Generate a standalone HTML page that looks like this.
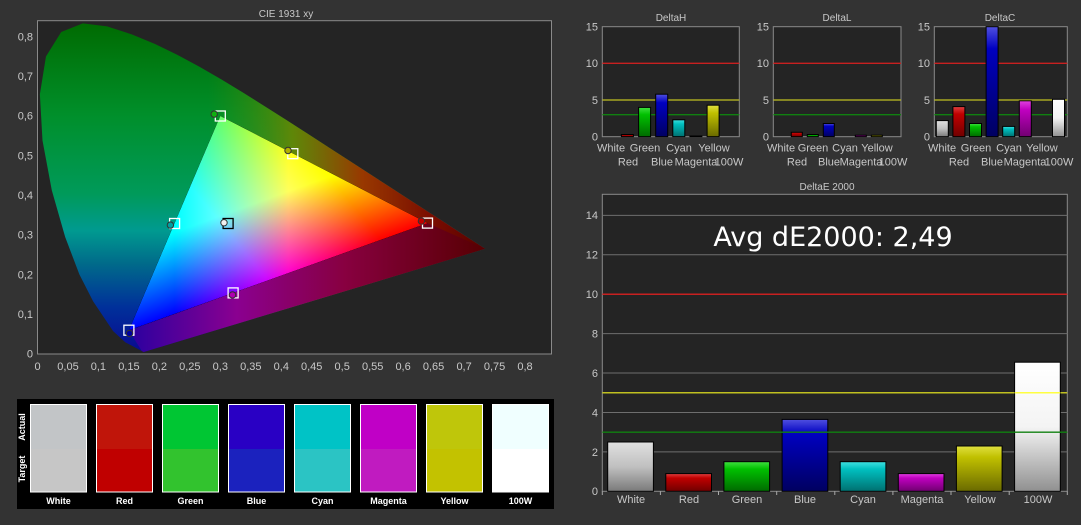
<!DOCTYPE html>
<html><head><meta charset="utf-8"><style>
html,body{margin:0;padding:0;background:#333;}
svg{display:block}
text{font-family:"Liberation Sans","DejaVu Sans",sans-serif;fill:#c8c8c8;}
</style></head><body>
<svg width="1081" height="525" viewBox="0 0 1081 525" xmlns="http://www.w3.org/2000/svg">
<defs>
<linearGradient id="locV" gradientUnits="userSpaceOnUse" x1="0" y1="0" x2="0" y2="0.84">
<stop offset="0" stop-color="#0a0890"/>
<stop offset="0.14" stop-color="#00309a"/>
<stop offset="0.27" stop-color="#006a8a"/>
<stop offset="0.37" stop-color="#009a90"/>
<stop offset="0.48" stop-color="#009a5a"/>
<stop offset="0.72" stop-color="#008f2a"/>
<stop offset="1" stop-color="#006a00"/>
</linearGradient>
<linearGradient id="locH" gradientUnits="userSpaceOnUse" x1="0.28" y1="0" x2="0.74" y2="0">
<stop offset="0" stop-color="#3a8a00" stop-opacity="0"/>
<stop offset="0.3" stop-color="#6f8500" stop-opacity="0.85"/>
<stop offset="0.55" stop-color="#983800"/>
<stop offset="0.8" stop-color="#7a0c00"/>
<stop offset="1" stop-color="#550000"/>
</linearGradient>
<linearGradient id="purp" gradientUnits="userSpaceOnUse" x1="0.15" y1="0" x2="0.74" y2="0">
<stop offset="0" stop-color="#2a00a0"/>
<stop offset="0.3" stop-color="#8a0090"/>
<stop offset="0.6" stop-color="#880040"/>
<stop offset="1" stop-color="#560000"/>
</linearGradient>
<linearGradient id="gR" gradientUnits="userSpaceOnUse" x1="427.5" y1="223.1" x2="174.6" y2="223.1">
<stop offset="0" stop-color="#ff0000"/><stop offset="0.55" stop-color="#ff0000"/><stop offset="1" stop-color="#000"/></linearGradient>
<linearGradient id="gG" gradientUnits="userSpaceOnUse" x1="220.3" y1="116" x2="278.2" y2="276.7">
<stop offset="0" stop-color="#00ff00"/><stop offset="0.55" stop-color="#00ff00"/><stop offset="1" stop-color="#000"/></linearGradient>
<linearGradient id="gB" gradientUnits="userSpaceOnUse" x1="128.9" y1="330.2" x2="323.9" y2="169.6">
<stop offset="0" stop-color="#0000ff"/><stop offset="0.55" stop-color="#0000ff"/><stop offset="1" stop-color="#000"/></linearGradient>
<clipPath id="locClip"><polygon points="0.1741,0.005 0.1440,0.0297 0.1241,0.0578 0.0913,0.1327 0.0687,0.2007 0.0454,0.2950 0.0235,0.4127 0.0082,0.5384 0.0039,0.6548 0.0139,0.7502 0.0389,0.8120 0.0743,0.8338 0.1142,0.8262 0.1547,0.8059 0.1929,0.7816 0.2296,0.7543 0.2658,0.7243 0.3016,0.6923 0.3373,0.6589 0.3731,0.6245 0.4087,0.5896 0.4441,0.5547 0.4788,0.5202 0.5125,0.4866 0.5448,0.4544 0.5752,0.4242 0.6029,0.3965 0.6270,0.3725 0.6482,0.3514 0.6658,0.3340 0.6801,0.3197 0.7347,0.2653"/></clipPath>
<linearGradient id="bW" x1="0" y1="0" x2="0" y2="1"><stop offset="0" stop-color="#e0e0e0"/><stop offset="0.5" stop-color="#c0c0c0"/><stop offset="1" stop-color="#7a7a7a"/></linearGradient>
<linearGradient id="bR" x1="0" y1="0" x2="0" y2="1"><stop offset="0" stop-color="#e04040"/><stop offset="0.25" stop-color="#c00000"/><stop offset="1" stop-color="#700000"/></linearGradient>
<linearGradient id="bG" x1="0" y1="0" x2="0" y2="1"><stop offset="0" stop-color="#40e040"/><stop offset="0.25" stop-color="#00c000"/><stop offset="1" stop-color="#006a00"/></linearGradient>
<linearGradient id="bB" x1="0" y1="0" x2="0" y2="1"><stop offset="0" stop-color="#5050e0"/><stop offset="0.2" stop-color="#0000c0"/><stop offset="1" stop-color="#000060"/></linearGradient>
<linearGradient id="bC" x1="0" y1="0" x2="0" y2="1"><stop offset="0" stop-color="#40e0e0"/><stop offset="0.25" stop-color="#00c0c0"/><stop offset="1" stop-color="#007070"/></linearGradient>
<linearGradient id="bM" x1="0" y1="0" x2="0" y2="1"><stop offset="0" stop-color="#e040e0"/><stop offset="0.25" stop-color="#c000c0"/><stop offset="1" stop-color="#700070"/></linearGradient>
<linearGradient id="bY" x1="0" y1="0" x2="0" y2="1"><stop offset="0" stop-color="#e0e040"/><stop offset="0.25" stop-color="#c0c000"/><stop offset="1" stop-color="#6a6a00"/></linearGradient>
<linearGradient id="bWW" x1="0" y1="0" x2="0" y2="1"><stop offset="0" stop-color="#ffffff"/><stop offset="0.5" stop-color="#f4f4f4"/><stop offset="1" stop-color="#909090"/></linearGradient>
</defs>

<!-- CIE chart -->
<text x="286" y="17" font-size="10" text-anchor="middle">CIE 1931 xy</text>
<rect x="37.5" y="20.7" width="514" height="333.3" fill="#242424" stroke="#8a8a8a" stroke-width="1"/>
<g transform="translate(37.5 354) scale(609.4 -396.6)">
 <g clip-path="url(#locClip)">
  <rect x="0" y="0" width="0.8" height="0.85" fill="url(#locV)"/>
  <rect x="0" y="0" width="0.8" height="0.85" fill="url(#locH)"/>
  <polygon points="0.15,0.06 0.1741,0.0 0.7347,0.2653 0.64,0.33" fill="url(#purp)"/>
 </g>
</g>
<g style="isolation:isolate">
 <polygon points="427.5,223.1 220.3,116 128.9,330.2" fill="#000"/>
 <polygon points="427.5,223.1 220.3,116 128.9,330.2" fill="url(#gR)" style="mix-blend-mode:plus-lighter"/>
 <polygon points="427.5,223.1 220.3,116 128.9,330.2" fill="url(#gG)" style="mix-blend-mode:plus-lighter"/>
 <polygon points="427.5,223.1 220.3,116 128.9,330.2" fill="url(#gB)" style="mix-blend-mode:plus-lighter"/>
</g>
<g fill="none" stroke-width="1.3">
 <rect x="215.3" y="111" width="10" height="10" stroke="#fff"/>
 <rect x="287.8" y="148.7" width="10" height="10" stroke="#fff"/>
 <rect x="422.5" y="218.1" width="10" height="10" stroke="#fff"/>
 <rect x="169.6" y="218.5" width="10" height="10" stroke="#fff"/>
 <rect x="223.1" y="218.5" width="10" height="10" stroke="#000"/>
 <rect x="228.1" y="287.9" width="10" height="10" stroke="#fff"/>
 <rect x="123.9" y="325.2" width="10" height="10" stroke="#fff"/>
</g>
<g stroke="#333" stroke-width="1">
 <circle cx="214.2" cy="114.1" r="3.2" fill="#10b010"/>
 <circle cx="288" cy="150.5" r="3.2" fill="#b0b000"/>
 <circle cx="421.4" cy="221.1" r="3.2" fill="#c00000"/>
 <circle cx="170.4" cy="225.1" r="3.2" fill="#00a0a0"/>
 <circle cx="224" cy="222.7" r="3.2" fill="#f0f0f0"/>
 <circle cx="232.5" cy="294.9" r="3.2" fill="#b000b0"/>
 <circle cx="129.5" cy="333.4" r="3.2" fill="#0000a0"/>
</g>
<g font-size="11" text-anchor="end">
 <text x="33" y="40.5">0,8</text><text x="33" y="80">0,7</text><text x="33" y="119.7">0,6</text><text x="33" y="159.3">0,5</text><text x="33" y="199">0,4</text><text x="33" y="238.7">0,3</text><text x="33" y="278.3">0,2</text><text x="33" y="318">0,1</text><text x="33" y="357.5">0</text>
</g>
<g font-size="11" text-anchor="middle">
 <text x="37.5" y="370">0</text><text x="68" y="370">0,05</text><text x="98.4" y="370">0,1</text><text x="128.9" y="370">0,15</text><text x="159.4" y="370">0,2</text><text x="189.8" y="370">0,25</text><text x="220.3" y="370">0,3</text><text x="250.8" y="370">0,35</text><text x="281.3" y="370">0,4</text><text x="311.7" y="370">0,45</text><text x="342.2" y="370">0,5</text><text x="372.7" y="370">0,55</text><text x="403.1" y="370">0,6</text><text x="433.6" y="370">0,65</text><text x="464.1" y="370">0,7</text><text x="494.6" y="370">0,75</text><text x="525" y="370">0,8</text>
</g>

<!-- Swatches -->
<rect x="17" y="399" width="537" height="110" fill="#000"/>
<g stroke="#fff" stroke-width="1">
 <g><rect x="30.5" y="404.5" width="56" height="44.5" fill="#c2c5c7" stroke="none"/><rect x="30.5" y="449" width="56" height="43" fill="#c6c6c6" stroke="none"/><rect x="30.5" y="404.5" width="56" height="87.5" fill="none"/></g>
 <g><rect x="96.5" y="404.5" width="56" height="44.5" fill="#c0150a" stroke="none"/><rect x="96.5" y="449" width="56" height="43" fill="#c00000" stroke="none"/><rect x="96.5" y="404.5" width="56" height="87.5" fill="none"/></g>
 <g><rect x="162.5" y="404.5" width="56" height="44.5" fill="#00c633" stroke="none"/><rect x="162.5" y="449" width="56" height="43" fill="#32c32e" stroke="none"/><rect x="162.5" y="404.5" width="56" height="87.5" fill="none"/></g>
 <g><rect x="228.5" y="404.5" width="56" height="44.5" fill="#2900c4" stroke="none"/><rect x="228.5" y="449" width="56" height="43" fill="#1b22be" stroke="none"/><rect x="228.5" y="404.5" width="56" height="87.5" fill="none"/></g>
 <g><rect x="294.5" y="404.5" width="56" height="44.5" fill="#00c3c6" stroke="none"/><rect x="294.5" y="449" width="56" height="43" fill="#2bc4c4" stroke="none"/><rect x="294.5" y="404.5" width="56" height="87.5" fill="none"/></g>
 <g><rect x="360.5" y="404.5" width="56" height="44.5" fill="#c000c6" stroke="none"/><rect x="360.5" y="449" width="56" height="43" fill="#c01bc0" stroke="none"/><rect x="360.5" y="404.5" width="56" height="87.5" fill="none"/></g>
 <g><rect x="426.5" y="404.5" width="56" height="44.5" fill="#bfc60a" stroke="none"/><rect x="426.5" y="449" width="56" height="43" fill="#c3c200" stroke="none"/><rect x="426.5" y="404.5" width="56" height="87.5" fill="none"/></g>
 <g><rect x="492.5" y="404.5" width="56" height="44.5" fill="#f0ffff" stroke="none"/><rect x="492.5" y="449" width="56" height="43" fill="#ffffff" stroke="none"/><rect x="492.5" y="404.5" width="56" height="87.5" fill="none"/></g>
</g>
<g font-size="9" font-weight="bold" text-anchor="middle">
 <text x="58.5" y="504" style="fill:#fff">White</text><text x="124.5" y="504" style="fill:#fff">Red</text><text x="190.5" y="504" style="fill:#fff">Green</text><text x="256.5" y="504" style="fill:#fff">Blue</text><text x="322.5" y="504" style="fill:#fff">Cyan</text><text x="388.5" y="504" style="fill:#fff">Magenta</text><text x="454.5" y="504" style="fill:#fff">Yellow</text><text x="520.5" y="504" style="fill:#fff">100W</text>
 <text transform="translate(25 427) rotate(-90)" style="fill:#fff">Actual</text>
 <text transform="translate(25 469) rotate(-90)" style="fill:#fff">Target</text>
</g>

<!-- Small charts -->
<g font-size="11">
 <text x="671" y="21" text-anchor="middle" font-size="10">DeltaH</text>
 <rect x="602.3" y="26.7" width="137" height="110" fill="#242424" stroke="#8a8a8a"/>
 <line x1="602.3" y1="63.3" x2="739.3" y2="63.3" stroke="#c82020" stroke-width="1.3"/>
 <line x1="602.3" y1="100" x2="739.3" y2="100" stroke="#c0c020" stroke-width="1.3"/>
 <line x1="602.3" y1="114.7" x2="739.3" y2="114.7" stroke="#108010" stroke-width="1.3"/>
 <g stroke="#000" stroke-width="1">
  <rect x="621.4" y="134.5" width="12" height="2.2" fill="url(#bR)"/>
  <rect x="638.6" y="107.4" width="12" height="29.3" fill="url(#bG)"/>
  <rect x="655.7" y="94.2" width="12" height="42.5" fill="url(#bB)"/>
  <rect x="672.8" y="119.8" width="12" height="16.9" fill="url(#bC)"/>
  <rect x="689.9" y="136" width="12" height="0.7" fill="url(#bM)"/>
  <rect x="707.1" y="105.2" width="12" height="31.5" fill="url(#bY)"/>
 </g>
 <g text-anchor="end"><text x="598" y="30.5">15</text><text x="598" y="67">10</text><text x="598" y="104">5</text><text x="598" y="140.5">0</text></g>
 <g text-anchor="middle"><text x="611" y="151.5">White</text><text x="645" y="151.5">Green</text><text x="679" y="151.5">Cyan</text><text x="714" y="151.5">Yellow</text><text x="628" y="165.5">Red</text><text x="662" y="165.5">Blue</text><text x="696" y="165.5">Magenta</text><text x="729" y="165.5">100W</text></g>

 <text x="837" y="21" text-anchor="middle" font-size="10">DeltaL</text>
 <rect x="773.3" y="26.7" width="127.7" height="110" fill="#242424" stroke="#8a8a8a"/>
 <line x1="773.3" y1="63.3" x2="901" y2="63.3" stroke="#c82020" stroke-width="1.3"/>
 <line x1="773.3" y1="100" x2="901" y2="100" stroke="#c0c020" stroke-width="1.3"/>
 <line x1="773.3" y1="114.7" x2="901" y2="114.7" stroke="#108010" stroke-width="1.3"/>
 <g stroke="#000" stroke-width="1">
  <rect x="791.3" y="132.3" width="11" height="4.4" fill="url(#bR)"/>
  <rect x="807.3" y="134.5" width="11" height="2.2" fill="url(#bG)"/>
  <rect x="823.3" y="123.5" width="11" height="13.2" fill="url(#bB)"/>
  <rect x="855.3" y="135.2" width="11" height="1.5" fill="url(#bM)"/>
  <rect x="871.3" y="135.2" width="11" height="1.5" fill="url(#bY)"/>
 </g>
 <g text-anchor="end"><text x="769" y="30.5">15</text><text x="769" y="67">10</text><text x="769" y="104">5</text><text x="769" y="140.5">0</text></g>
 <g text-anchor="middle"><text x="781" y="151.5">White</text><text x="813" y="151.5">Green</text><text x="845" y="151.5">Cyan</text><text x="877" y="151.5">Yellow</text><text x="797" y="165.5">Red</text><text x="829" y="165.5">Blue</text><text x="861" y="165.5">Magenta</text><text x="893" y="165.5">100W</text></g>

 <text x="1000" y="21" text-anchor="middle" font-size="10">DeltaC</text>
 <rect x="934.3" y="26.7" width="133" height="110" fill="#242424" stroke="#8a8a8a"/>
 <line x1="934.3" y1="63.3" x2="1067.3" y2="63.3" stroke="#c82020" stroke-width="1.3"/>
 <line x1="934.3" y1="100" x2="1067.3" y2="100" stroke="#c0c020" stroke-width="1.3"/>
 <line x1="934.3" y1="114.7" x2="1067.3" y2="114.7" stroke="#108010" stroke-width="1.3"/>
 <g stroke="#000" stroke-width="1">
  <rect x="936.3" y="120.6" width="12" height="16.1" fill="url(#bW)"/>
  <rect x="952.9" y="106.6" width="12" height="30.1" fill="url(#bR)"/>
  <rect x="969.5" y="123.5" width="12" height="13.2" fill="url(#bG)"/>
  <rect x="986.1" y="26.7" width="12" height="110" fill="url(#bB)"/>
  <rect x="1002.7" y="126.4" width="12" height="10.3" fill="url(#bC)"/>
  <rect x="1019.3" y="100.8" width="12" height="35.9" fill="url(#bM)"/>
  <rect x="1052.5" y="99.3" width="12" height="37.4" fill="url(#bWW)"/>
 </g>
 <g text-anchor="end"><text x="930" y="30.5">15</text><text x="930" y="67">10</text><text x="930" y="104">5</text><text x="930" y="140.5">0</text></g>
 <g text-anchor="middle"><text x="942" y="151.5">White</text><text x="976" y="151.5">Green</text><text x="1009" y="151.5">Cyan</text><text x="1042" y="151.5">Yellow</text><text x="959" y="165.5">Red</text><text x="992" y="165.5">Blue</text><text x="1025" y="165.5">Magenta</text><text x="1059" y="165.5">100W</text></g>
</g>

<!-- DeltaE 2000 -->
<text x="827" y="190" text-anchor="middle" font-size="10">DeltaE 2000</text>
<rect x="602.3" y="194.3" width="465" height="297" fill="#242424" stroke="#8a8a8a"/>
<g stroke="#6e6e6e" stroke-width="1">
 <line x1="602.3" y1="451.9" x2="1067.3" y2="451.9"/><line x1="602.3" y1="412.5" x2="1067.3" y2="412.5"/><line x1="602.3" y1="373" x2="1067.3" y2="373"/><line x1="602.3" y1="333.6" x2="1067.3" y2="333.6"/><line x1="602.3" y1="254.8" x2="1067.3" y2="254.8"/><line x1="602.3" y1="215.4" x2="1067.3" y2="215.4"/>
</g>
<line x1="602.3" y1="294.2" x2="1067.3" y2="294.2" stroke="#c82020" stroke-width="1.5"/>
<line x1="602.3" y1="392.7" x2="1067.3" y2="392.7" stroke="#c0c020" stroke-width="1.5"/>
<text x="833" y="246" text-anchor="middle" font-size="27" style="font-family:'DejaVu Sans','Liberation Sans',sans-serif;fill:#fff">Avg dE2000: 2,49</text>
<g stroke="#000" stroke-width="1">
 <rect x="607.7" y="442" width="45.7" height="49.3" fill="url(#bW)"/>
 <rect x="665.8" y="473.6" width="45.7" height="17.7" fill="url(#bR)"/>
 <rect x="723.9" y="461.7" width="45.7" height="29.6" fill="url(#bG)"/>
 <rect x="782.1" y="419.4" width="45.7" height="71.9" fill="url(#bB)"/>
 <rect x="840.2" y="461.7" width="45.7" height="29.6" fill="url(#bC)"/>
 <rect x="898.3" y="473.6" width="45.7" height="17.7" fill="url(#bM)"/>
 <rect x="956.4" y="446" width="45.7" height="45.3" fill="url(#bY)"/>
 <rect x="1014.6" y="362.2" width="45.7" height="129.1" fill="url(#bWW)"/>
</g>
<line x1="1014.6" y1="392.7" x2="1060.3" y2="392.7" stroke="#ffff40" stroke-width="1.5"/>
<line x1="602.3" y1="432.2" x2="1067.3" y2="432.2" stroke="#108010" stroke-width="1.3"/>
<g stroke="#aaa" stroke-width="1">
 <line x1="602.3" y1="491.3" x2="602.3" y2="495"/><line x1="660.4" y1="491.3" x2="660.4" y2="495"/><line x1="718.5" y1="491.3" x2="718.5" y2="495"/><line x1="776.7" y1="491.3" x2="776.7" y2="495"/><line x1="834.8" y1="491.3" x2="834.8" y2="495"/><line x1="892.9" y1="491.3" x2="892.9" y2="495"/><line x1="951" y1="491.3" x2="951" y2="495"/><line x1="1009.2" y1="491.3" x2="1009.2" y2="495"/><line x1="1067.3" y1="491.3" x2="1067.3" y2="495"/>
</g>
<g font-size="11" text-anchor="end">
 <text x="598" y="219">14</text><text x="598" y="258.5">12</text><text x="598" y="298">10</text><text x="598" y="337.5">8</text><text x="598" y="377">6</text><text x="598" y="416.5">4</text><text x="598" y="456">2</text><text x="598" y="495">0</text>
</g>
<g font-size="11" text-anchor="middle">
 <text x="631" y="503">White</text><text x="689" y="503">Red</text><text x="747" y="503">Green</text><text x="805" y="503">Blue</text><text x="863" y="503">Cyan</text><text x="922" y="503">Magenta</text><text x="980" y="503">Yellow</text><text x="1038" y="503">100W</text>
</g>
</svg>
</body></html>
